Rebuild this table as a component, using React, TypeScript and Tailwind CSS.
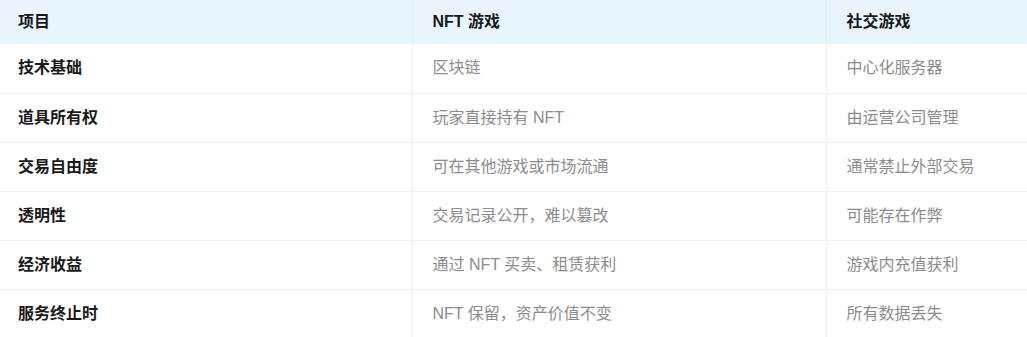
import React from "react";

const rows: [string, string, string][] = [
  ["技术基础", "区块链", "中心化服务器"],
  ["道具所有权", "玩家直接持有 NFT", "由运营公司管理"],
  ["交易自由度", "可在其他游戏或市场流通", "通常禁止外部交易"],
  ["透明性", "交易记录公开，难以篡改", "可能存在作弊"],
  ["经济收益", "通过 NFT 买卖、租赁获利", "游戏内充值获利"],
  ["服务终止时", "NFT 保留，资产价值不变", "所有数据丢失"],
];

export default function App() {
  return (
    <div
      className="w-[1027px] h-[337px] overflow-hidden bg-white text-[16px]"
      style={{ fontFamily: '"Liberation Sans", "Noto Sans CJK SC", sans-serif' }}
    >
      <table className="w-full border-collapse table-fixed">
        <colgroup>
          <col className="w-[412px]" />
          <col className="w-[414px]" />
          <col />
        </colgroup>
        <thead>
          <tr className="h-[44px] bg-[#e9f5fe]">
            <th className="pl-[18px] text-left font-semibold text-[#1a1a1a]">项目</th>
            <th className="pl-5 text-left font-semibold text-[#1a1a1a] border-l border-[#e3eef7]">NFT 游戏</th>
            <th className="pl-5 text-left font-semibold text-[#1a1a1a] border-l border-[#e3eef7]">社交游戏</th>
          </tr>
        </thead>
        <tbody>
          {rows.map((r) => (
            <tr key={r[0]} className="h-[49px] border-b border-[#f0f0f0]">
              <td className="pl-[18px] font-semibold text-[#1a1a1a]">{r[0]}</td>
              <td className="pl-5 text-[#8c8c8c] border-l border-[#f0f0f0]">{r[1]}</td>
              <td className="pl-5 text-[#8c8c8c] border-l border-[#f0f0f0]">{r[2]}</td>
            </tr>
          ))}
        </tbody>
      </table>
    </div>
  );
}
